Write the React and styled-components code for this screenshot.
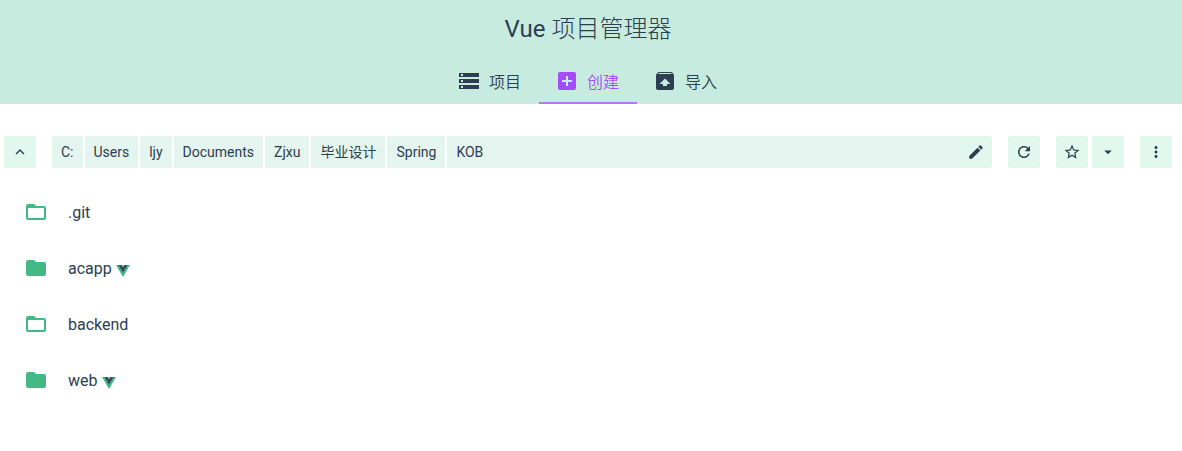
import React from "react";
import styled, { createGlobalStyle } from "styled-components";

const GlobalStyle = createGlobalStyle`
  * { box-sizing: border-box; }
  body {
    margin: 0;
    background: #fff;
    color: #2c3e50;
    font-family: Roboto, "Noto Sans CJK SC", sans-serif;
    font-size: 16px;
  }
`;

const Header = styled.header`
  background: #c8ebdf;
  padding-right: 6px;
  display: flex;
  flex-direction: column;
  align-items: center;
`;

const Title = styled.h1`
  margin: 0;
  height: 60px;
  line-height: 58px;
  font-size: 24px;
  font-weight: 400;
`;

const Thin = styled.span`
  font-weight: 300;
`;

const Tabs = styled.nav`
  display: flex;
`;

const Tab = styled.a`
  display: flex;
  align-items: center;
  gap: 8px;
  height: 44px;
  padding: 0 18px 0 16px;
  border-bottom: 2px solid ${(p) => (p.$active ? "#b477ee" : "transparent")};
  color: ${(p) => (p.$active ? "#a54bf8" : "#2c3e50")};
  font-weight: 350;
  text-decoration: none;
`;

const Icon = styled.svg`
  flex: none;
  width: ${(p) => p.$size}px;
  height: ${(p) => p.$size}px;
  fill: currentColor;
`;

const Main = styled.main`
  padding: 32px 10px 0 4px;
`;

const Toolbar = styled.div`
  display: flex;
  gap: 16px;
`;

const ButtonGroup = styled.div`
  display: flex;
  gap: 4px;
`;

const IconButton = styled.button`
  display: flex;
  align-items: center;
  justify-content: center;
  flex: none;
  width: 32px;
  height: 32px;
  padding: 0;
  border: 0;
  border-radius: ${(p) => (p.$joined ? "0 3px 3px 0" : "3px")};
  background: #e0f8ed;
  color: #2c3e50;
  cursor: pointer;
`;

const Path = styled.div`
  flex: 1;
  display: flex;
  min-width: 0;
  border-radius: 3px;
  overflow: hidden;
`;

const Crumbs = styled.div`
  flex: 1;
  display: flex;
  gap: 2px;
  min-width: 0;
`;

const Crumb = styled.button`
  height: 32px;
  padding: 0 9px;
  border: 0;
  background: #e4f4ee;
  color: #2c3e50;
  font: inherit;
  font-size: 14px;
  line-height: 32px;
  white-space: nowrap;
  cursor: pointer;

  &:last-child {
    flex: 1;
    text-align: left;
  }
`;

const Folders = styled.ul`
  list-style: none;
  margin: 16px 0 0;
  padding: 0;
`;

const Folder = styled.li`
  display: flex;
  align-items: center;
  height: 56px;
  padding-left: 20px;
  gap: 20px;
`;

const FolderIcon = styled(Icon)`
  color: #42b983;
`;

const FolderName = styled.span`
  display: flex;
  align-items: center;
  gap: 4px;
  padding-top: 2px;
  line-height: 24px;
`;

const Logo = styled.svg`
  width: 14px;
  height: 12px;
  margin-top: 4px;
`;

const paths = {
  storage: "M2 20h20v-4H2v4zm2-3h2v2H4v-2zM2 4v4h20V4H2zm4 3H4V5h2v2zm-4 7h20v-4H2v4zm2-3h2v2H4v-2z",
  addBox: "M19 3H5c-1.11 0-2 .9-2 2v14c0 1.1.89 2 2 2h14c1.1 0 2-.9 2-2V5c0-1.1-.9-2-2-2zm-2 10h-4v4h-2v-4H7v-2h4V7h2v4h4v2z",
  unarchive: "M20.55 5.22l-1.39-1.68C18.88 3.21 18.47 3 18 3H6c-.47 0-.88.21-1.15.55L3.46 5.22C3.17 5.57 3 6.01 3 6.5V19c0 1.1.89 2 2 2h14c1.1 0 2-.9 2-2V6.5c0-.49-.17-.93-.45-1.28zM12 9.5l5.5 5.5H14v2h-4v-2H6.5L12 9.5zM5.12 5l.82-1h12l.93 1H5.12z",
  up: "M7.41 15.41L12 10.83l4.59 4.58L18 14l-6-6-6 6z",
  edit: "M3 17.25V21h3.75L17.81 9.94l-3.75-3.75L3 17.25zM20.71 7.04c.39-.39.39-1.02 0-1.41l-2.34-2.34c-.39-.39-1.02-.39-1.41 0l-1.83 1.83 3.75 3.75 1.83-1.83z",
  refresh: "M17.65 6.35C16.2 4.9 14.21 4 12 4c-4.42 0-7.99 3.58-7.99 8s3.57 8 7.99 8c3.73 0 6.84-2.55 7.73-6h-2.08c-.82 2.33-3.04 4-5.65 4-3.31 0-6-2.69-6-6s2.69-6 6-6c1.66 0 3.14.69 4.22 1.78L13 11h7V4l-2.35 2.35z",
  star: "M22 9.24l-7.19-.62L12 2 9.19 8.63 2 9.24l5.46 4.73L5.82 21 12 17.27 18.18 21l-1.63-7.03L22 9.24zM12 15.4l-3.76 2.27 1-4.28-3.32-2.88 4.38-.38L12 6.1l1.71 4.04 4.38.38-3.32 2.88 1 4.28L12 15.4z",
  down: "M7 10l5 5 5-5z",
  more: "M12 8c1.1 0 2-.9 2-2s-.9-2-2-2-2 .9-2 2 .9 2 2 2zm0 2c-1.1 0-2 .9-2 2s.9 2 2 2 2-.9 2-2-.9-2-2-2zm0 6c-1.1 0-2 .9-2 2s.9 2 2 2 2-.9 2-2-.9-2-2-2z",
  folder: "M10 4H4c-1.1 0-1.99.9-1.99 2L2 18c0 1.1.9 2 2 2h16c1.1 0 2-.9 2-2V8c0-1.1-.9-2-2-2h-8l-2-2z",
  folderOpen: "M20 6h-8l-2-2H4c-1.1 0-1.99.9-1.99 2L2 18c0 1.1.9 2 2 2h16c1.1 0 2-.9 2-2V8c0-1.1-.9-2-2-2zm0 12H4V8h16v10z",
};

function Glyph({ name, size = 18, as: Component = Icon }) {
  return (
    <Component $size={size} viewBox="0 0 24 24" aria-hidden="true">
      <path d={paths[name]} />
    </Component>
  );
}

function Action({ icon, label, joined }) {
  return (
    <IconButton type="button" aria-label={label} $joined={joined}>
      <Glyph name={icon} />
    </IconButton>
  );
}

function VueLogo() {
  return (
    <Logo viewBox="0 0 14 12" role="img" aria-label="Vue">
      <path fill="#42b983" d="M0 0h14L7 12z" />
      <path fill="#35495e" d="M2.6 0h8.8L7 7.4z" />
      <path fill="#a9c9c0" d="M5.5 0h3L7 2.2z" />
    </Logo>
  );
}

const tabs = [
  { icon: "storage", label: "项目" },
  { icon: "addBox", label: "创建", active: true },
  { icon: "unarchive", label: "导入" },
];

const crumbs = ["C:", "Users", "ljy", "Documents", "Zjxu", "毕业设计", "Spring", "KOB"];

const folders = [
  { name: ".git" },
  { name: "acapp", vue: true },
  { name: "backend" },
  { name: "web", vue: true },
];

export default function App() {
  return (
    <>
      <GlobalStyle />
      <Header>
        <Title>
          Vue <Thin>项目管理器</Thin>
        </Title>
        <Tabs>
          {tabs.map((tab) => (
            <Tab key={tab.label} href="#" $active={tab.active}>
              <Glyph name={tab.icon} size={24} />
              {tab.label}
            </Tab>
          ))}
        </Tabs>
      </Header>
      <Main>
        <Toolbar>
          <Action icon="up" label="上级目录" />
          <Path>
            <Crumbs>
              {crumbs.map((crumb) => (
                <Crumb type="button" key={crumb}>
                  {crumb}
                </Crumb>
              ))}
            </Crumbs>
            <Action icon="edit" label="编辑路径" joined />
          </Path>
          <Action icon="refresh" label="刷新" />
          <ButtonGroup>
            <Action icon="star" label="收藏" />
            <Action icon="down" label="收藏夹" />
          </ButtonGroup>
          <Action icon="more" label="更多" />
        </Toolbar>
        <Folders>
          {folders.map((folder) => (
            <Folder key={folder.name}>
              <Glyph as={FolderIcon} name={folder.vue ? "folder" : "folderOpen"} size={24} />
              <FolderName>
                {folder.name}
                {folder.vue && <VueLogo />}
              </FolderName>
            </Folder>
          ))}
        </Folders>
      </Main>
    </>
  );
}
